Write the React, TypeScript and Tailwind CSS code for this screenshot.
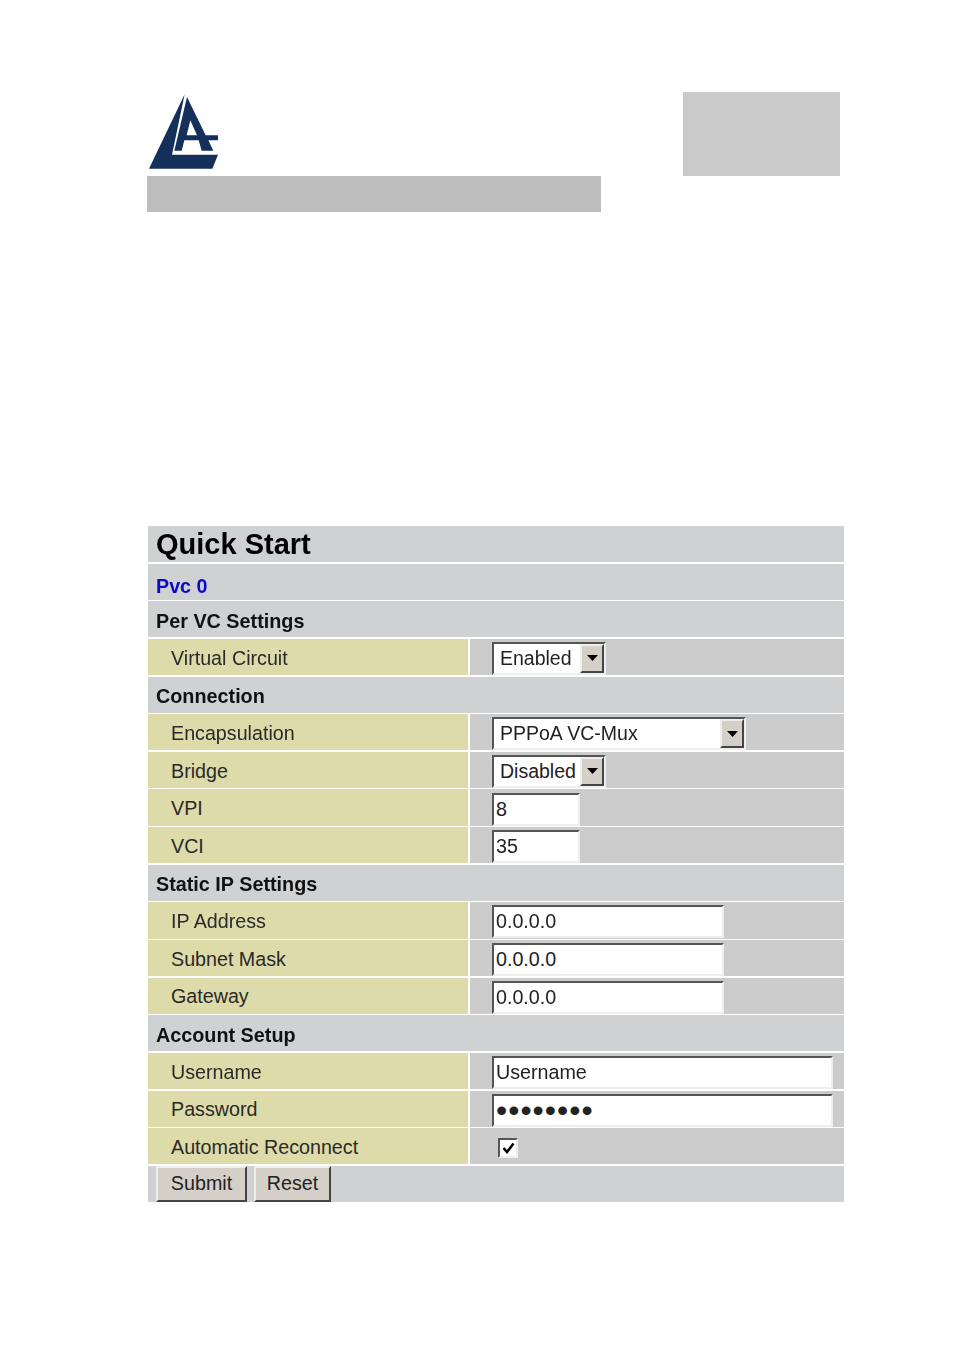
const font = "font-['Liberation_Sans',Arial,sans-serif]";

function Logo() {
  return (
    <svg viewBox="24 24 216 234" width={72} height={78} className="block ml-[1px]" fill="#14305a">
      <path d="M134 28 L27 251 L217 251 L234 209 L96 209 Z" />
      <path fillRule="evenodd" d="M141 36 L103 197 L125 197 L133 166 L176 166 L185 197 L220 197 L205 166 L234 166 L234 151 L197 151 Z M151 106 L140 151 L171 151 Z" />
    </svg>
  );
}

function Section({ children, className = "pt-[5px] text-[19.8px] font-bold text-[#111]" }: { children: React.ReactNode; className?: string }) {
  return <div className={`bg-[#d0d1d3] pl-2 flex items-center leading-none min-h-0 ${className}`}>{children}</div>;
}

function Row({ label, children }: { label: string; children: React.ReactNode }) {
  return (
    <div className="flex gap-[2px] min-h-0">
      <div className="w-[320px] bg-[#dcdba9] pl-[23px] pt-[3px] flex items-center leading-none text-[19.7px] text-[#2a2a2a]">{label}</div>
      <div className="flex-1 bg-[#cccccc] pl-[22px] pt-[3px] flex items-center">{children}</div>
    </div>
  );
}

function Select({ value, width }: { value: string; width: string }) {
  return (
    <div className={`${width} h-[33px] flex items-stretch bg-white border-2 border-t-[#555] border-l-[#555] border-b-[#eeeeee] border-r-[#eeeeee]`}>
      <span className="flex-1 pl-[6px] flex items-center leading-none text-[19.5px] text-[#222] whitespace-nowrap overflow-hidden">{value}</span>
      <span className="w-[24px] flex items-center justify-center bg-[#d4d0c8] border-2 border-t-[#eeeeee] border-l-[#eeeeee] border-b-[#444] border-r-[#444]">
        <svg width="11" height="6" viewBox="0 0 11 6"><path d="M0 0H11L5.5 6Z" fill="#000" /></svg>
      </span>
    </div>
  );
}

function Field({ value, width, type = "text", size = "text-[19.7px]" }: { value: string; width: string; type?: string; size?: string }) {
  return (
    <input
      readOnly
      type={type}
      value={value}
      className={`${width} ${size} h-[33px] bg-white pl-[2px] text-[#222] outline-none border-2 border-t-[#555] border-l-[#555] border-b-[#eeeeee] border-r-[#eeeeee]`}
    />
  );
}

function Btn({ children, width }: { children: React.ReactNode; width: string }) {
  return (
    <span className={`${width} h-full flex items-center justify-center leading-none bg-[#d4d0c8] text-[19.7px] text-[#222] border-2 border-t-[#eeeeee] border-l-[#eeeeee] border-b-[#444] border-r-[#444]`}>
      {children}
    </span>
  );
}

export default function App() {
  return (
    <div className={`w-[954px] h-[1350px] bg-white pt-[92px] overflow-hidden ${font}`}>
      <div className="flex pl-[147px]">
        <div className="w-[454px]">
          <div className="h-[84px] pt-[1px]"><Logo /></div>
          <div className="h-[36px] bg-[#bdbdbd]" />
        </div>
        <div className="ml-[82px] w-[157px] h-[84px] bg-[#cacaca]" />
      </div>

      <div className="mt-[314px] ml-[148px] w-[696px] h-[676px] grid grid-rows-[repeat(18,minmax(0,1fr))] gap-y-[1.5px] blur-[0.4px]">
        <Section className="text-[29px] font-bold text-black">Quick Start</Section>
        <Section className="pt-[10px] text-[19.7px] font-bold text-[#0a0ac8]">Pvc 0</Section>
        <Section>Per VC Settings</Section>
        <Row label="Virtual Circuit"><Select value="Enabled" width="w-[114px]" /></Row>
        <Section>Connection</Section>
        <Row label="Encapsulation"><Select value="PPPoA VC-Mux" width="w-[254px]" /></Row>
        <Row label="Bridge"><Select value="Disabled" width="w-[114px]" /></Row>
        <Row label="VPI"><Field value="8" width="w-[88px]" /></Row>
        <Row label="VCI"><Field value="35" width="w-[88px]" /></Row>
        <Section>Static IP Settings</Section>
        <Row label="IP Address"><Field value="0.0.0.0" width="w-[232px]" /></Row>
        <Row label="Subnet Mask"><Field value="0.0.0.0" width="w-[232px]" /></Row>
        <Row label="Gateway"><Field value="0.0.0.0" width="w-[232px]" /></Row>
        <Section>Account Setup</Section>
        <Row label="Username"><Field value="Username" width="w-[341px]" /></Row>
        <Row label="Password"><Field value="password" type="password" width="w-[341px]" size="text-[32px] tracking-[1px]" /></Row>
        <Row label="Automatic Reconnect">
          <span className="ml-[6px] w-[20px] h-[20px] flex items-center justify-center bg-white border-2 border-t-[#555] border-l-[#555] border-b-[#eeeeee] border-r-[#eeeeee]">
            <svg width="13" height="12" viewBox="0 0 13 12"><path d="M1.5 6 L5 10 L11.5 1.5" fill="none" stroke="#000" strokeWidth="2.6" /></svg>
          </span>
        </Row>
        <div className="bg-[#d0d1d3] pl-2 flex gap-[7px] min-h-0">
          <Btn width="w-[91px]">Submit</Btn>
          <Btn width="w-[77px]">Reset</Btn>
        </div>
      </div>
    </div>
  );
}
